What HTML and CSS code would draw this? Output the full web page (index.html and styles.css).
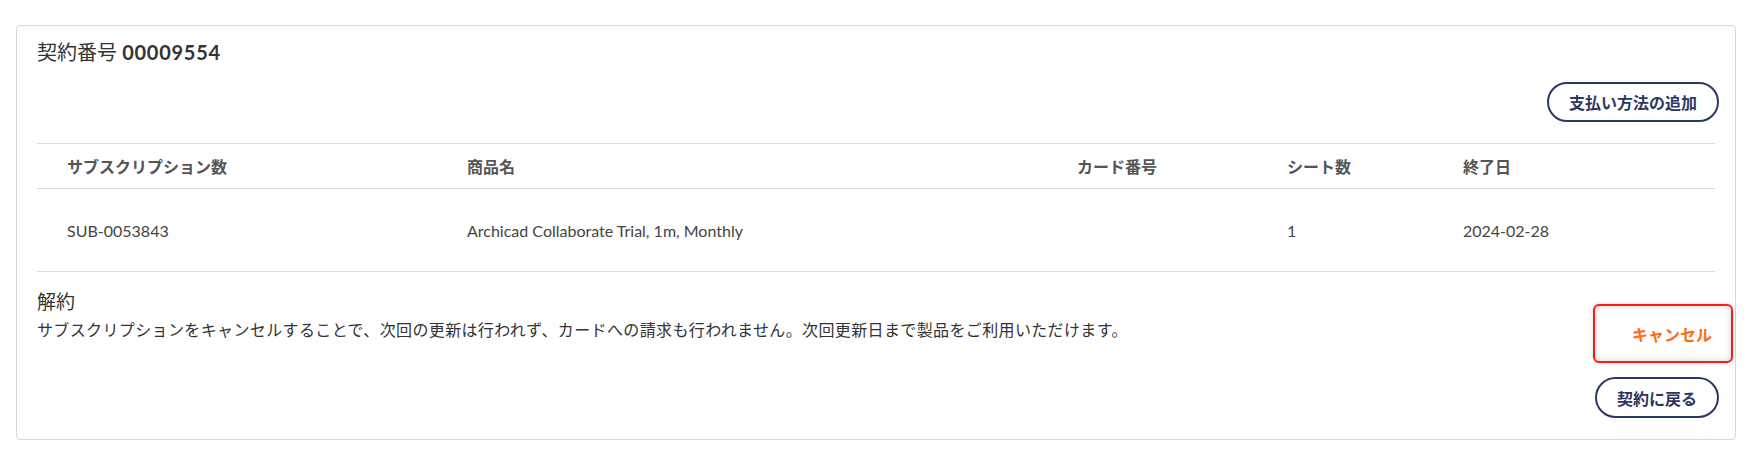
FILE: index.html
```html
<!DOCTYPE html>
<html lang="ja">
<head>
<meta charset="UTF-8">
<meta name="viewport" content="width=device-width, initial-scale=1.0">
<title>契約詳細</title>
<link rel="stylesheet" href="styles.css">
</head>
<body>

<div class="contract-card">
    <h2 class="contract-title">契約番号 <strong>00009554</strong></h2>

    <div class="actions">
        <button class="btn-outline">支払い方法の追加</button>
    </div>

    <table class="sub-table">
        <colgroup>
            <col class="col-sub">
            <col class="col-product">
            <col class="col-card">
            <col class="col-seats">
            <col class="col-end">
        </colgroup>
        <thead>
            <tr>
                <th>サブスクリプション数</th>
                <th>商品名</th>
                <th>カード番号</th>
                <th>シート数</th>
                <th>終了日</th>
            </tr>
        </thead>
        <tbody>
            <tr>
                <td>SUB-0053843</td>
                <td>Archicad Collaborate Trial, 1m, Monthly</td>
                <td></td>
                <td>1</td>
                <td>2024-02-28</td>
            </tr>
        </tbody>
    </table>

    <div class="cancel-section">
        <div class="cancel-text">
            <h3>解約</h3>
            <p>サブスクリプションをキャンセルすることで、次回の更新は行われず、カードへの請求も行われません。次回更新日まで製品をご利用いただけます。</p>
        </div>
        <button class="cancel-button">キャンセル</button>
    </div>

    <div class="actions back-row">
        <button class="btn-outline">契約に戻る</button>
    </div>
</div>

</body>
</html>
```

FILE: styles.css
```css
body {
    font-family: Lato, "Noto Sans CJK JP", sans-serif;
    margin: 0;
    padding: 0;
    background-color: #fff;
    color: #333;
}
.contract-card {
    margin: 25px 14px 0 16px;
    padding: 14px 20px 21px 20px;
    border: 1px solid #d8d8d8;
    border-radius: 4px;
}
.contract-title {
    margin: 0;
    font-size: 20px;
    line-height: 24px;
    font-weight: normal;
    color: #333;
}
.contract-title strong {
    font-weight: bold;
    letter-spacing: 0.75px;
}
.actions {
    display: flex;
    justify-content: flex-end;
    margin-top: 18px;
    margin-right: -4px;
}
.btn-outline {
    height: 40px;
    padding: 0 20px;
    font-family: inherit;
    font-size: 16px;
    font-weight: bold;
    color: #2c365e;
    background-color: #fff;
    border: 2px solid #2c3864;
    border-radius: 21px;
    cursor: pointer;
}
.sub-table {
    width: 100%;
    margin-top: 21px;
    border-collapse: collapse;
    table-layout: fixed;
    border-top: 1px solid #d9d9d9;
}
.col-sub { width: 400px; }
.col-product { width: 610px; }
.col-card { width: 210px; }
.col-seats { width: 176px; }
.sub-table th,
.sub-table td {
    padding: 0 0 0 30px;
    text-align: left;
    border-bottom: 1px solid #d9d9d9;
}
.sub-table th {
    height: 44px;
    font-size: 16px;
    font-weight: bold;
    color: #555;
}
.sub-table td {
    height: 82px;
    font-size: 16px;
    color: #444;
}
.cancel-section {
    display: flex;
    justify-content: space-between;
    align-items: flex-start;
    margin-top: 16px;
}
.cancel-text h3 {
    margin: 0;
    font-size: 19px;
    line-height: 28px;
    font-weight: normal;
    color: #333;
}
.cancel-text p {
    margin: 0;
    font-size: 16px;
    line-height: 28px;
    letter-spacing: 0.37px;
    color: #333;
}
.cancel-button {
    width: 140px;
    height: 59px;
    margin-top: 16px;
    margin-right: -18px;
    padding: 0 19px 0 0;
    text-align: right;
    font-family: inherit;
    font-size: 16px;
    font-weight: bold;
    color: #ff6a13;
    background-color: #fff;
    border: 2px solid #ff1a1a;
    border-radius: 6px;
    box-shadow: inset 0 0 6px rgba(0, 0, 0, 0.2), 0 0 4px rgba(0, 0, 0, 0.15);
    cursor: pointer;
}
.back-row {
    margin-top: 14px;
}
.back-row .btn-outline {
    height: 41px;
}
```
